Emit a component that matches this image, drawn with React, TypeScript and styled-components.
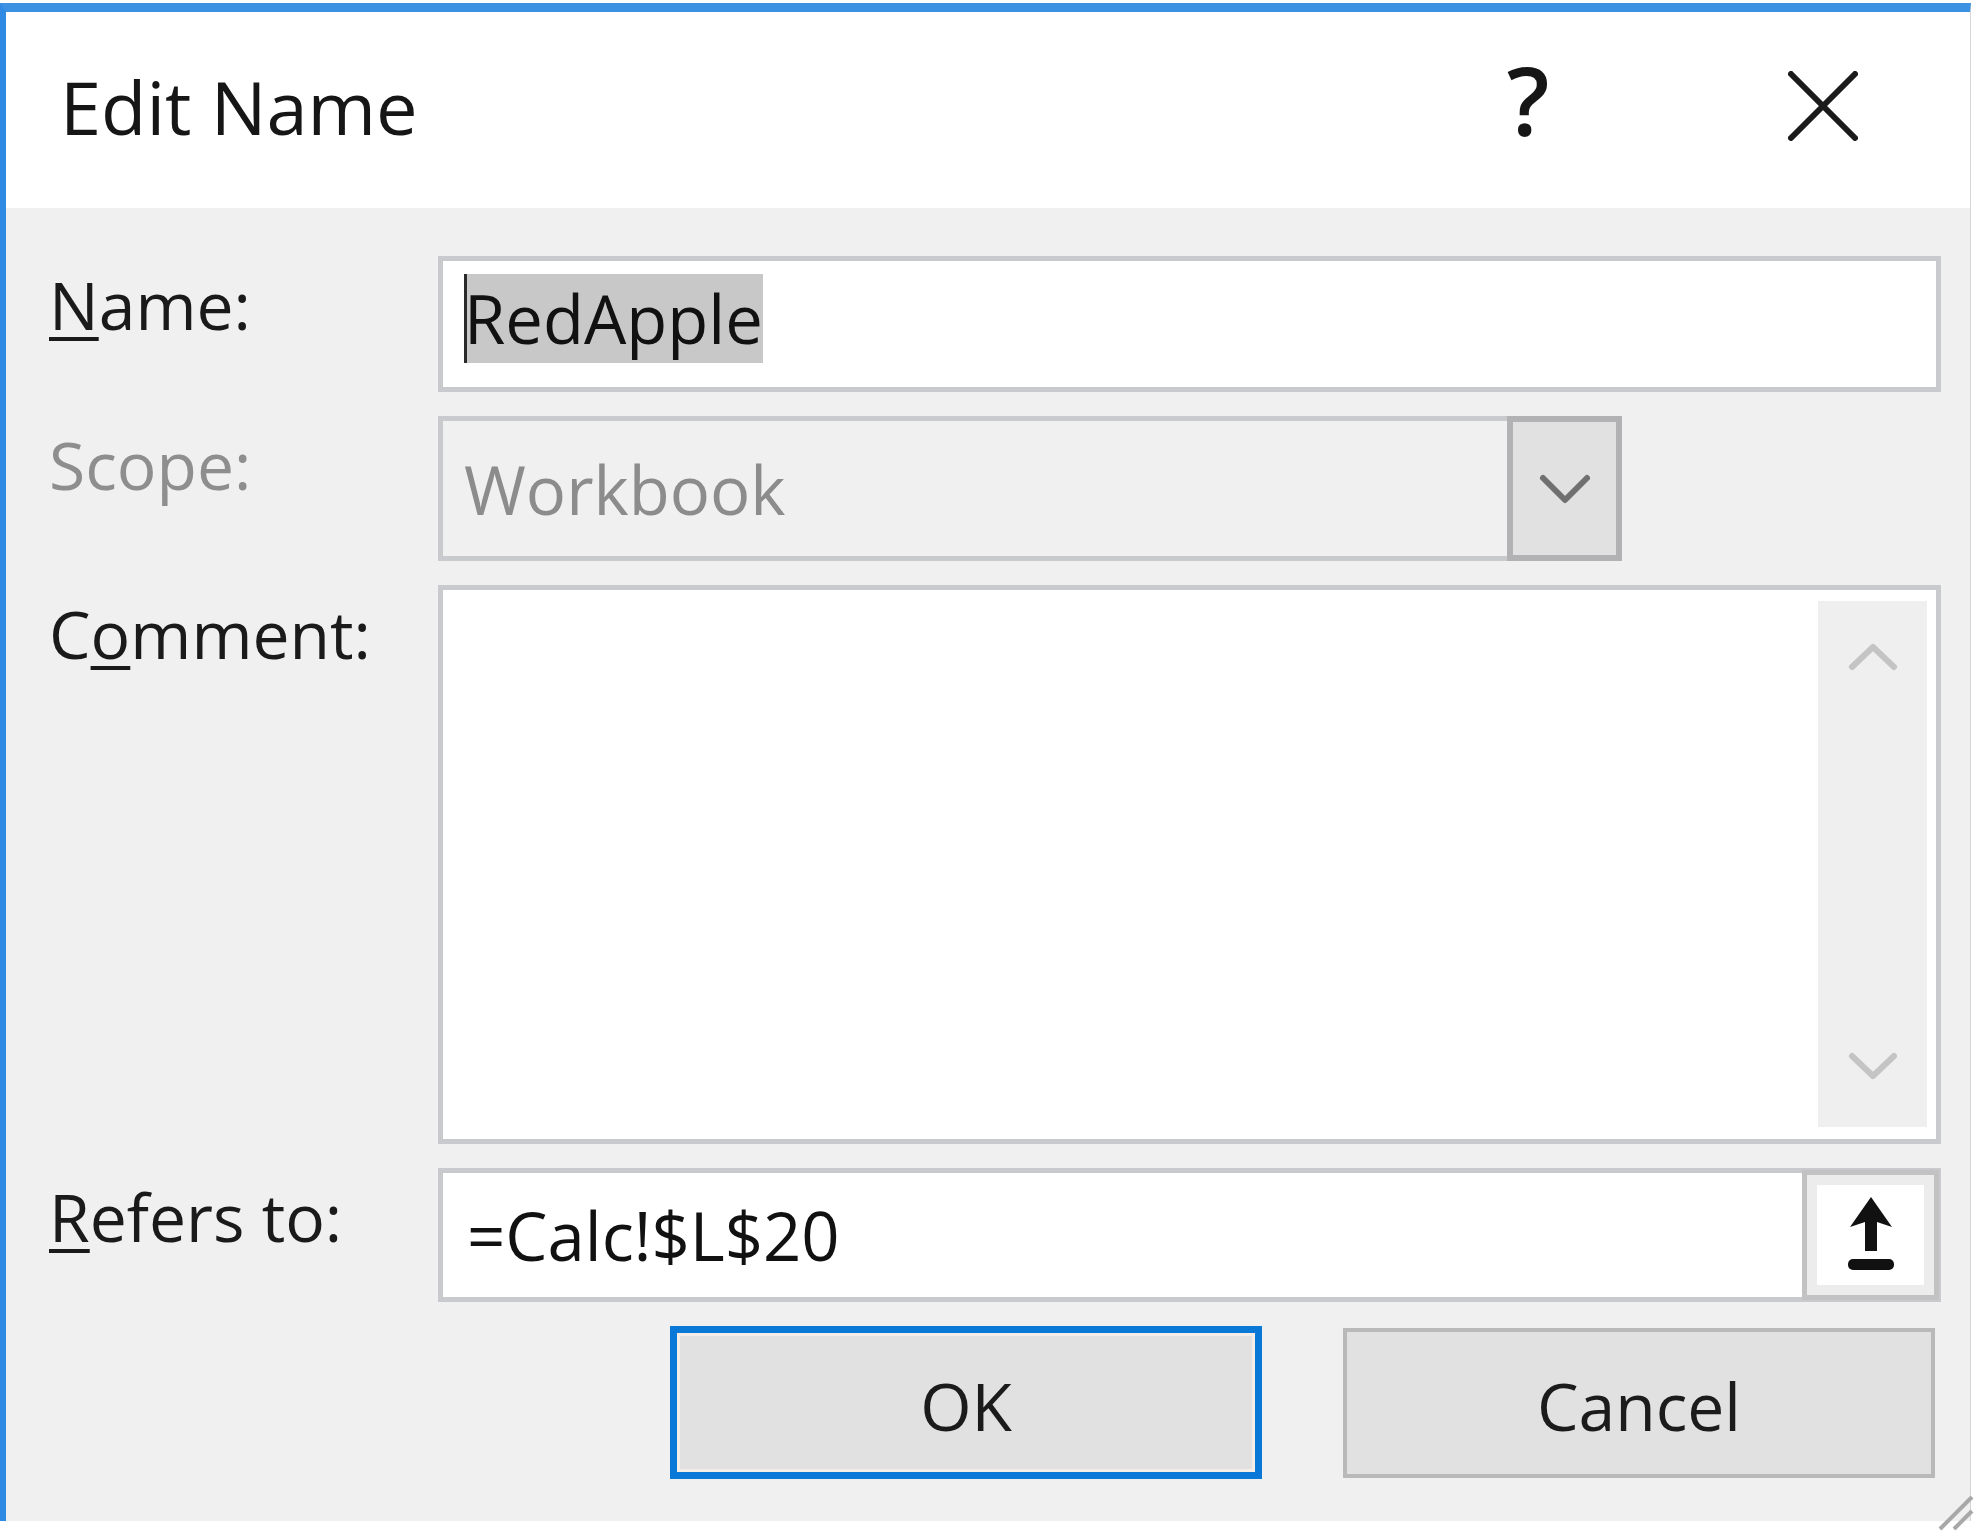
import React from 'react';
import styled, { createGlobalStyle } from 'styled-components';

const GlobalStyle = createGlobalStyle`
  html, body {
    margin: 0;
    padding: 0;
    background: #ffffff;
  }
  body {
    font-family: 'Open Sans', 'Noto Sans', 'DejaVu Sans', sans-serif;
    font-weight: 500;
  }
`;

const Page = styled.div`
  width: 1979px;
  height: 1536px;
  padding-top: 3px;
  box-sizing: border-box;
  overflow: hidden;
`;

const Window = styled.div`
  position: relative;
  width: 1971px;
  box-sizing: border-box;
  border-top: 9px solid #3c92e2;
  border-left: 6px solid #2f8ae4;
  border-right: 1px solid #d6d6d6;
`;

const TitleBar = styled.div`
  height: 196px;
  box-sizing: border-box;
  padding: 0 67px 8px 54px;
  display: flex;
  align-items: center;
  background: #ffffff;
`;

const Title = styled.h1`
  margin: 0;
  font-size: 74px;
  font-weight: 500;
  color: #161616;
  flex: 1;
`;

const HelpButton = styled.div`
  width: 120px;
  margin-bottom: 12px;
  text-align: center;
  font-size: 94px;
  font-weight: 600;
  line-height: 1;
  color: #161616;
`;

const CloseButton = styled.div`
  width: 160px;
  margin-left: 155px;
  display: flex;
  justify-content: center;
  align-items: center;
`;

const Body = styled.div`
  position: relative;
  height: 1313px;
  box-sizing: border-box;
  padding: 48px 29px 42px 43px;
  background: #f0f0f0;
  display: grid;
  grid-template-columns: 389px 1fr;
  grid-template-rows: 136px 145px 559px 134px 153px;
  row-gap: 24px;
`;

const Label = styled.label<{ $disabled?: boolean }>`
  align-self: start;
  padding-top: 3px;
  font-size: 66px;
  line-height: 90px;
  color: ${({ $disabled }) => ($disabled ? '#8e8e8e' : '#1a1a1a')};
`;

const Key = styled.span`
  text-decoration: underline;
  text-decoration-thickness: 4px;
  text-underline-offset: 7px;
`;

const TextBox = styled.div`
  display: flex;
  align-items: center;
  box-sizing: border-box;
  padding-left: 21px;
  border: 5px solid #c9cacd;
  background: #ffffff;
  font-size: 67px;
  color: #111111;
`;

const Selected = styled.span`
  display: inline-block;
  margin-bottom: 12px;
  line-height: 89px;
  background: #c8c8c8;
  box-shadow: inset 3px 0 0 #2a2a2a;
`;

const RefBox = styled(TextBox)`
  padding-left: 24px;
  justify-content: space-between;
`;

const SelectBox = styled.div`
  width: 1184px;
  display: flex;
  box-sizing: border-box;
  border: 5px solid #c9cacd;
  background: #f0f0f0;
`;

const SelectValue = styled.div`
  flex: 1;
  display: flex;
  align-items: center;
  padding-left: 21px;
  font-size: 67px;
  color: #8c8c8c;
`;

const DropButton = styled.div`
  width: 115px;
  margin: -5px -5px -5px 0;
  box-sizing: border-box;
  border: 6px solid #b2b2b4;
  background: #e1e1e1;
  display: flex;
  align-items: center;
  justify-content: center;
`;

const CommentBox = styled.div`
  display: flex;
  justify-content: flex-end;
  box-sizing: border-box;
  border: 5px solid #c9cacd;
  background: #ffffff;
`;

const ScrollBar = styled.div`
  width: 109px;
  margin: 11px 9px 12px 0;
  padding: 40px 0 45px;
  box-sizing: border-box;
  background: #efefef;
  display: flex;
  flex-direction: column;
  justify-content: space-between;
  align-items: center;
`;

const PickButton = styled.div`
  width: 137px;
  align-self: stretch;
  margin: -3px -3px -3px 0;
  box-sizing: border-box;
  border: 5px solid #c2c2c2;
  background: #ffffff;
  box-shadow: inset 0 0 0 10px #ececec;
  display: flex;
  align-items: center;
  justify-content: center;
`;

const ButtonRow = styled.div`
  grid-column: 2;
  display: flex;
  justify-content: flex-end;
  align-items: center;
  gap: 81px;
  padding-right: 6px;
`;

const DialogButton = styled.button<{ $primary?: boolean }>`
  width: 592px;
  height: ${({ $primary }) => ($primary ? '153px' : '150px')};
  box-sizing: border-box;
  border: ${({ $primary }) => ($primary ? '7px solid #0a78d7' : '4px solid #b9b9b9')};
  box-shadow: ${({ $primary }) => ($primary ? 'inset 0 0 0 3px #f3eee8' : 'none')};
  background: #e1e1e1;
  font-family: 'Open Sans', 'Noto Sans', sans-serif;
  font-size: 66px;
  font-weight: 500;
  color: #1b1b1b;
  padding: 4px 0 0;
`;

const Grip = styled.svg`
  position: absolute;
  right: -6px;
  bottom: -12px;
`;

const Chevron: React.FC<{ up?: boolean; color: string; w: number; h: number; stroke: number }> = ({
  up,
  color,
  w,
  h,
  stroke,
}) => (
  <svg width={w} height={h} viewBox={`0 0 ${w} ${h}`}>
    <polyline
      points={
        up
          ? `${stroke},${h - stroke} ${w / 2},${stroke} ${w - stroke},${h - stroke}`
          : `${stroke},${stroke} ${w / 2},${h - stroke} ${w - stroke},${stroke}`
      }
      fill="none"
      stroke={color}
      strokeWidth={stroke}
      strokeLinecap="round"
      strokeLinejoin="round"
    />
  </svg>
);

export default function App() {
  return (
    <Page>
      <GlobalStyle />
      <Window>
        <TitleBar>
          <Title>Edit Name</Title>
          <HelpButton>?</HelpButton>
          <CloseButton>
            <svg width="70" height="70" viewBox="0 0 70 70">
              <path d="M3 3 L67 67 M67 3 L3 67" stroke="#1b1b1b" strokeWidth="6" strokeLinecap="round" />
            </svg>
          </CloseButton>
        </TitleBar>
        <Body>
          <Label>
            <Key>N</Key>ame:
          </Label>
          <TextBox>
            <Selected>RedApple</Selected>
          </TextBox>

          <Label $disabled>Scope:</Label>
          <SelectBox>
            <SelectValue>Workbook</SelectValue>
            <DropButton>
              <Chevron color="#707070" w={56} h={34} stroke={6} />
            </DropButton>
          </SelectBox>

          <Label>
            C<Key>o</Key>mment:
          </Label>
          <CommentBox>
            <ScrollBar>
              <Chevron up color="#c4c4c4" w={54} h={32} stroke={6} />
              <Chevron color="#c4c4c4" w={54} h={32} stroke={6} />
            </ScrollBar>
          </CommentBox>

          <Label>
            <Key>R</Key>efers to:
          </Label>
          <RefBox>
            <span>=Calc!$L$20</span>
            <PickButton>
              <svg width="52" height="76" viewBox="0 0 52 76">
                <path d="M26 0 L47 30 L32 25 L32 54 L20 54 L20 25 L5 30 Z" fill="#111111" />
                <rect x="3" y="62" width="46" height="11" rx="5" fill="#111111" />
              </svg>
            </PickButton>
          </RefBox>

          <ButtonRow>
            <DialogButton $primary>OK</DialogButton>
            <DialogButton>Cancel</DialogButton>
          </ButtonRow>
        </Body>
        <Grip width="44" height="44" viewBox="0 0 44 44">
          <path d="M40 8 L8 40 M40 22 L22 40" stroke="#a8a8a8" strokeWidth="4" />
        </Grip>
      </Window>
    </Page>
  );
}
